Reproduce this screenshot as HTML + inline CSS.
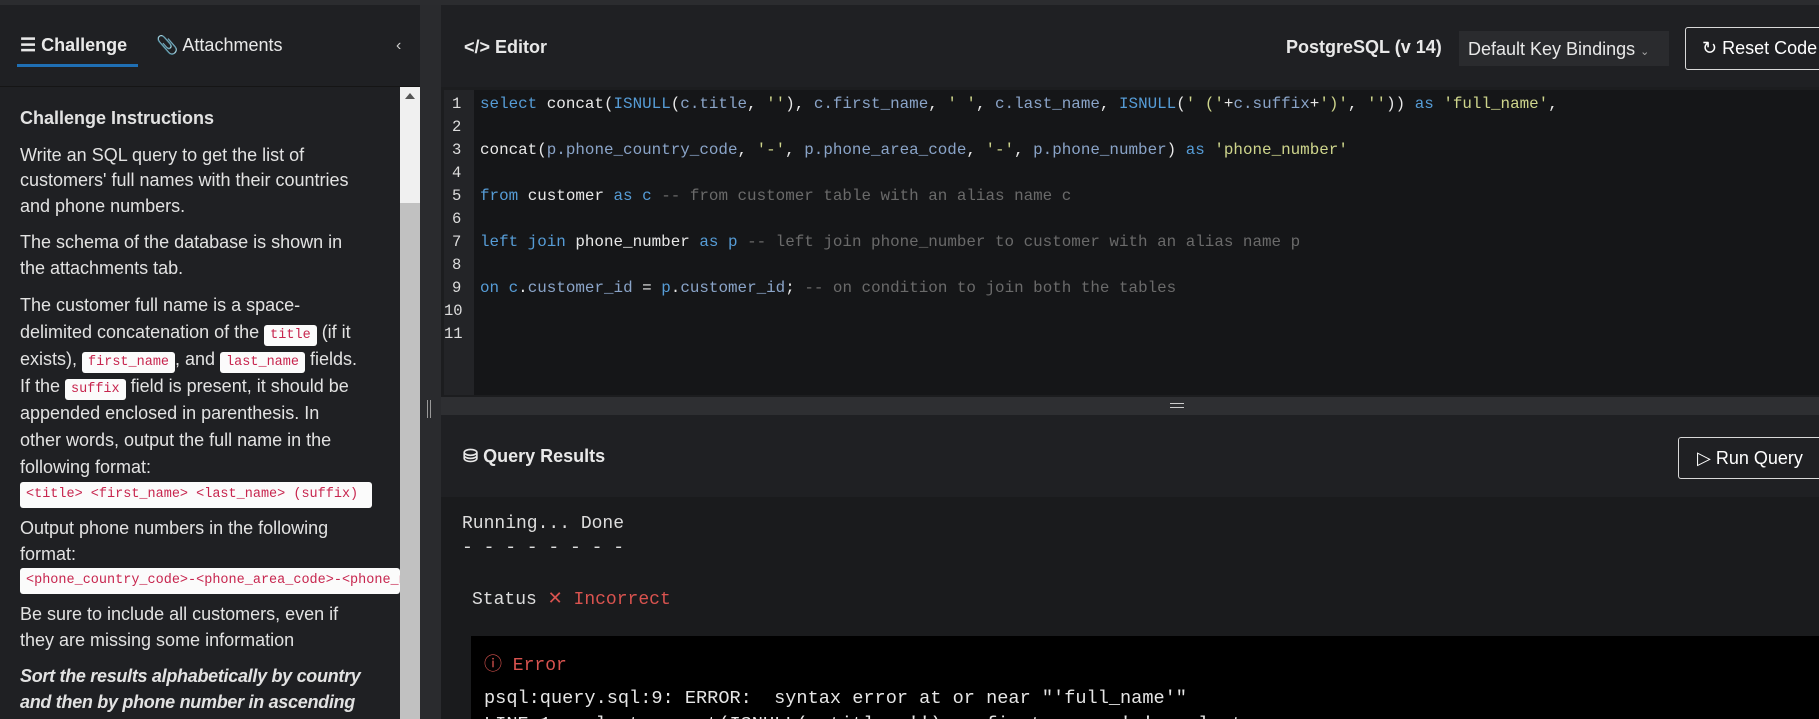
<!DOCTYPE html>
<html style="height:719px;overflow:hidden"><head><meta charset="utf-8"><style>
*{box-sizing:border-box;margin:0;padding:0}
body{width:1819px;height:719px;overflow:hidden;background:#1c1d1f;font-family:"Liberation Sans",sans-serif;color:#e8e8e8;position:relative}
.abs{position:absolute}
.left{left:0;top:5px;width:420px;height:714px;background:#1f2023}
.tabs{height:82px;border-bottom:1px solid #151515}
.tab{position:absolute;top:30px;font-size:18px;}
.clip{position:absolute;left:0;top:87px;width:400px;height:632px;overflow:hidden}
.content{position:absolute;left:20px;top:19px;width:345px;font-size:18px;line-height:25.5px;color:#e2e2e2}
.content p{margin-bottom:11px}
code{font-family:"Liberation Mono",monospace;font-size:13.5px;line-height:1;color:#c7254e;background:#fbfbfb;padding:3px 6px;border-radius:3px}
.blk{display:block;white-space:nowrap;overflow:hidden;width:380px;padding:5px 6px;margin:1px 0 8px;line-height:16px}
.sb{left:400px;top:87px;width:20px;height:632px;background:#f0f0f0}
.mono{font-family:"Liberation Mono",monospace}
.code{left:444px;top:90px;width:1375px;height:305px;background:#151618}
.gut{left:444px;top:90px;width:30px;height:305px;background:#232427}
.ln{position:absolute;left:0;width:30px;font-size:15.5px;color:#ddd;padding-left:8px}
.cl{position:absolute;left:480px;font-size:15.9px;white-space:pre;color:#e8e8e8}
.k{color:#569cd6}.v{color:#8aa4c8}.s{color:#ced58c}.c{color:#6a6a6a}
.btn{border:1px solid #d8d8d8;border-radius:3px;font-size:18px;color:#fff}
</style></head><body>
<div class="abs" style="left:0;top:0;width:1819px;height:5px;background:#2b2c2f"></div>
<div class="abs left">
 <div class="tabs"></div>
 <div class="tab" style="left:20px;font-weight:bold">☰ Challenge</div>
 <div class="tab" style="left:156px">&#128206; Attachments</div>
 <div class="abs" style="left:17px;top:59px;width:121px;height:3px;background:#1f6fb4"></div>
 <div class="abs" style="left:396px;top:32px;font-size:16px;color:#ccc">‹</div>
</div>
<div class="clip"><div class="content">
<p style="font-weight:bold;margin-bottom:11px">Challenge Instructions</p>
<p>Write an SQL query to get the list of customers' full names with their countries and phone numbers.</p>
<p>The schema of the database is shown in the attachments tab.</p>
<p style="margin-bottom:0;line-height:27px">The customer full name is a space-delimited concatenation of the <code>title</code> (if it exists), <code>first_name</code>, and <code>last_name</code> fields. If the <code>suffix</code> field is present, it should be appended enclosed in parenthesis. In other words, output the full name in the following format:</p>
<code class="blk" style="width:352px">&lt;title&gt; &lt;first_name&gt; &lt;last_name&gt; (suffix)</code>
<p style="margin-bottom:0">Output phone numbers in the following format:</p>
<code class="blk">&lt;phone_country_code&gt;-&lt;phone_area_code&gt;-&lt;phone_number&gt;</code>
<p>Be sure to include all customers, even if they are missing some information</p>
<p style="font-weight:bold;font-style:italic;letter-spacing:-0.3px;width:362px">Sort the results alphabetically by country and then by phone number in ascending order.</p>
</div></div>
<div class="abs sb"><div class="abs" style="left:0;top:116px;width:20px;height:516px;background:#c1c1c1"></div><div class="abs" style="left:5px;top:6px;border:5px solid transparent;border-bottom:6px solid #555;border-top:0"></div></div>
<div class="abs" style="left:420px;top:5px;width:21px;height:714px;background:#2a2b2e"></div>
<div class="abs" style="left:427px;top:400px;width:4px;height:18px;border-left:1px solid #999;border-right:1px solid #999"></div>
<div class="abs" style="left:441px;top:5px;width:1378px;height:82px;background:#1f2023"></div>
<div class="abs" style="left:464px;top:37px;font-size:18px;font-weight:bold">&lt;/&gt; Editor</div>
<div class="abs" style="left:1286px;top:37px;font-size:18px;font-weight:bold">PostgreSQL (v 14)</div>
<div class="abs" style="left:1459px;top:31px;width:210px;height:35px;background:#2a2b2e;font-size:18px;padding:8px 9px">Default Key Bindings <span style="font-size:11px;color:#aaa">⌄</span></div>
<div class="abs btn" style="left:1685px;top:27px;width:160px;height:43px;padding:10px 16px;white-space:nowrap">↻ Reset Code</div>
<div class="abs code"></div><div class="abs gut"></div>
<div class="mono">
<div class="ln" style="top:95px;left:444px;position:absolute">1</div><div class="ln" style="top:118px;left:444px;position:absolute">2</div><div class="ln" style="top:141px;left:444px;position:absolute">3</div><div class="ln" style="top:164px;left:444px;position:absolute">4</div><div class="ln" style="top:187px;left:444px;position:absolute">5</div><div class="ln" style="top:210px;left:444px;position:absolute">6</div><div class="ln" style="top:233px;left:444px;position:absolute">7</div><div class="ln" style="top:256px;left:444px;position:absolute">8</div><div class="ln" style="top:279px;left:444px;position:absolute">9</div><div class="ln" style="top:302px;left:444px;position:absolute;padding-left:0">10</div><div class="ln" style="top:325px;left:444px;position:absolute;padding-left:0">11</div>
<div class="cl" style="top:95px"><span class="k">select</span> concat(<span class="k">ISNULL</span>(<span class="v">c.title</span>, <span class="s">''</span>), <span class="v">c.first_name</span>, <span class="s">' '</span>, <span class="v">c.last_name</span>, <span class="k">ISNULL</span>(<span class="s">' ('</span>+<span class="v">c.suffix</span>+<span class="s">')'</span>, <span class="s">''</span>)) <span class="k">as</span> <span class="s">'full_name'</span>,</div>
<div class="cl" style="top:141px">concat(<span class="v">p.phone_country_code</span>, <span class="s">'-'</span>, <span class="v">p.phone_area_code</span>, <span class="s">'-'</span>, <span class="v">p.phone_number</span>) <span class="k">as</span> <span class="s">'phone_number'</span></div>
<div class="cl" style="top:187px"><span class="k">from</span> customer <span class="k">as</span> <span class="k">c</span> <span class="c">-- from customer table with an alias name c</span></div>
<div class="cl" style="top:233px"><span class="k">left join</span> phone_number <span class="k">as</span> <span class="k">p</span> <span class="c">-- left join phone_number to customer with an alias name p</span></div>
<div class="cl" style="top:279px"><span class="k">on</span> <span class="k">c</span>.<span class="v">customer_id</span> = <span class="k">p</span>.<span class="v">customer_id</span>; <span class="c">-- on condition to join both the tables</span></div>
</div>
<div class="abs" style="left:441px;top:397px;width:1378px;height:18px;background:#2e2f32"></div>
<div class="abs" style="left:1170px;top:403px;width:14px;height:5px;border-top:1px solid #ccc;border-bottom:1px solid #ccc"></div>
<div class="abs" style="left:441px;top:415px;width:1378px;height:82px;background:#1f2023"></div>
<div class="abs" style="left:463px;top:446px;font-size:18px;font-weight:bold">⛁ Query Results</div>
<div class="abs btn" style="left:1678px;top:437px;width:160px;height:42px;padding:10px 18px;white-space:nowrap">▷ Run Query</div>
<div class="abs" style="left:441px;top:497px;width:1378px;height:222px;background:#1a1b1d"></div>
<div class="abs mono" style="left:462px;top:512px;font-size:18px;color:#ddd;line-height:24px">Running... Done<br>- - - - - - - -</div>
<div class="abs mono" style="left:472px;top:588px;font-size:18px;color:#ddd">Status <span style="color:#d9534f;font-family:'Liberation Sans'">✕</span> <span style="color:#d9534f">Incorrect</span></div>
<div class="abs" style="left:471px;top:636px;width:1348px;height:83px;background:#000;overflow:hidden">
<div class="abs mono" style="left:13px;top:14px;font-size:18px;color:#d9534f">ⓘ Error</div>
<div class="abs mono" style="left:13px;top:50px;font-size:18.6px;color:#e6e6e6;white-space:pre;line-height:26px">psql:query.sql:9: ERROR:  syntax error at or near "'full_name'"
LINE 1: select concat(ISNULL(c.title, ''), c.first_name, ' ', c.last...</div>
</div>
</body></html>
